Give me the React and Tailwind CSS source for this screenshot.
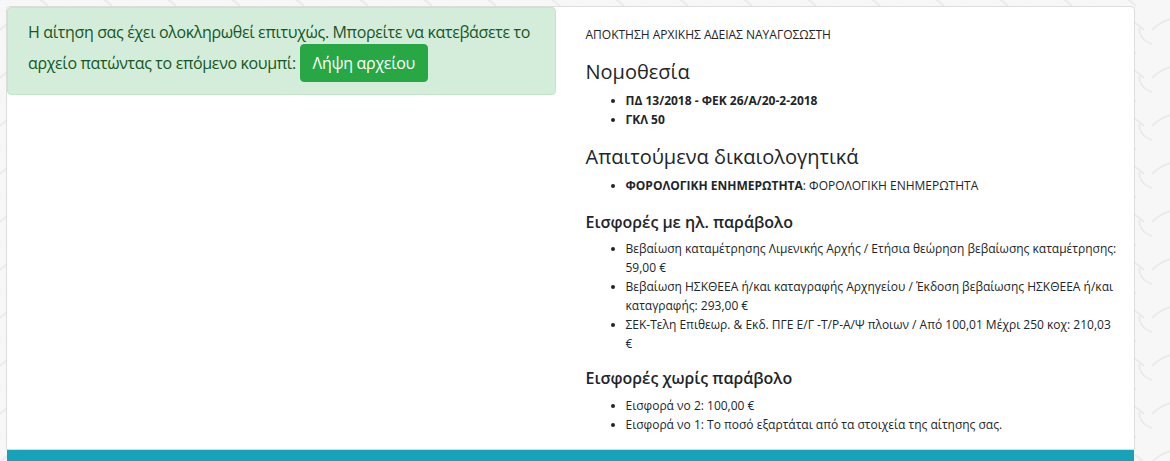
import React from "react";

const font = { fontFamily: '"Open Sans", "Noto Sans", sans-serif' };

const Waves = () => (
  <svg className="fixed inset-0 w-full h-full -z-10" aria-hidden="true">
    <defs>
      <pattern id="waves" width="64" height="48" patternUnits="userSpaceOnUse">
        <path d="M0 30 C16 14 40 14 56 30 C48 22 50 40 64 44" fill="none" stroke="#ebebeb" strokeWidth="2" />
        <path d="M-8 6 C8 -10 32 -10 48 6" fill="none" stroke="#ebebeb" strokeWidth="2" />
      </pattern>
    </defs>
    <rect width="100%" height="100%" fill="#f7f7f7" />
    <rect width="100%" height="100%" fill="url(#waves)" />
  </svg>
);

const feeItems = [
  "Βεβαίωση καταμέτρησης Λιμενικής Αρχής / Ετήσια θεώρηση βεβαίωσης καταμέτρησης: 59,00 €",
  "Βεβαίωση ΗΣΚΘΕΕΑ ή/και καταγραφής Αρχηγείου / Έκδοση βεβαίωσης ΗΣΚΘΕΕΑ ή/και καταγραφής: 293,00 €",
  "ΣΕΚ-Τελη Επιθεωρ. & Εκδ. ΠΓΕ Ε/Γ -Τ/Ρ-Α/Ψ πλοιων / Από 100,01 Μέχρι 250 κοχ: 210,03 €",
];

const otherItems = [
  "Εισφορά νο 2: 100,00 €",
  "Εισφορά νο 1: Το ποσό εξαρτάται από τα στοιχεία της αίτησης σας.",
];

export default function App() {
  return (
    <div className="min-h-screen pl-[6px] pt-[6px] pr-[35px] text-[#212529]" style={font}>
      <Waves />
      <div className="bg-white border border-[#dcdcdc] rounded-t-[4px]">
        <div className="flex">
          <div className="w-1/2 pr-[15px]">
            <div className="bg-[#d4edda] border border-[#c3e6cb] rounded-[4px] px-5 py-3 text-[#155724] text-[16px] leading-[24px] tracking-[-0.35px]">
              Η αίτηση σας έχει ολοκληρωθεί επιτυχώς. Μπορείτε να κατεβάσετε το
              αρχείο πατώντας το επόμενο κουμπί:{" "}
              <button className="bg-[#28a745] text-white rounded-[4px] px-3 py-[6px] text-[16px] leading-[24px] tracking-[-0.3px] border border-[#28a745]">
                Λήψη αρχείου
              </button>
            </div>
          </div>
          <div className="w-1/2 px-[15px] pt-[18px] pb-[15px] text-[12px] leading-[19px]">
            <p>ΑΠΟΚΤΗΣΗ ΑΡΧΙΚΗΣ ΑΔΕΙΑΣ ΝΑΥΑΓΟΣΩΣΤΗ</p>
            <h3 className="text-[20px] leading-[24px] font-medium mt-[16px] mb-[7px]">Νομοθεσία</h3>
            <ul className="list-disc pl-10 font-bold">
              <li>ΠΔ 13/2018 - ΦΕΚ 26/Α/20-2-2018</li>
              <li>ΓΚΛ 50</li>
            </ul>
            <h3 className="text-[20px] leading-[24px] font-medium mt-[16px] mb-[7px]">Απαιτούμενα δικαιολογητικά</h3>
            <ul className="list-disc pl-10">
              <li>
                <b>ΦΟΡΟΛΟΓΙΚΗ ΕΝΗΜΕΡΩΤΗΤΑ</b>: ΦΟΡΟΛΟΓΙΚΗ ΕΝΗΜΕΡΩΤΗΤΑ
              </li>
            </ul>
            <h4 className="text-[16px] leading-[20px] font-semibold mt-[17px] mb-[7px]">Εισφορές με ηλ. παράβολο</h4>
            <ul className="list-disc pl-10">
              {feeItems.map((item) => (
                <li key={item}>{item}</li>
              ))}
            </ul>
            <h4 className="text-[16px] leading-[20px] font-semibold mt-[15px] mb-[8px]">Εισφορές χωρίς παράβολο</h4>
            <ul className="list-disc pl-10">
              {otherItems.map((item) => (
                <li key={item}>{item}</li>
              ))}
            </ul>
          </div>
        </div>
      </div>
      <div className="bg-[#17a2b8] h-[40px] ml-px w-[1127px]"></div>
    </div>
  );
}
